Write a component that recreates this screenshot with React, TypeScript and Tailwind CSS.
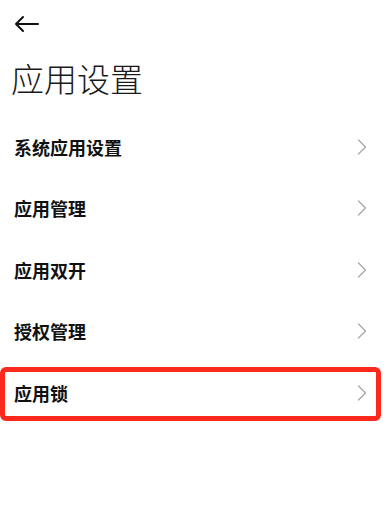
import React from "react";

const ITEMS = ["系统应用设置", "应用管理", "应用双开", "授权管理", "应用锁"];

function BackArrow() {
  return (
    <svg width="26" height="18" viewBox="0 0 26 18" fill="none">
      <path
        d="M24 9H2M9 2L2 9l7 7"
        stroke="#111"
        strokeWidth="2"
        strokeLinecap="round"
        strokeLinejoin="round"
      />
    </svg>
  );
}

function Chevron() {
  return (
    <svg width="10" height="16" viewBox="0 0 10 16" fill="none">
      <path
        d="M1.5 1L8.5 8l-7 7"
        stroke="#a8a8a8"
        strokeWidth="1.3"
        strokeLinecap="round"
        strokeLinejoin="round"
      />
    </svg>
  );
}

export default function App() {
  return (
    <div
      className="h-[517px] w-[391px] overflow-hidden bg-white text-[#111]"
      style={{ fontFamily: '"Noto Sans CJK SC", "Noto Sans", sans-serif' }}
    >
      <div className="flex h-[48px] items-center pl-[14px]">
        <BackArrow />
      </div>
      <h1 className="flex h-[68px] items-start pl-[11px] pt-[10px] text-[33px] font-light leading-[40px] text-[#1a1a1a]">
        应用设置
      </h1>
      <ul>
        {ITEMS.map((item, i) => (
          <li
            key={item}
            className="relative flex h-[61.5px] items-center justify-between pl-[14px] pr-[24px]"
          >
            <span className="text-[18px] font-bold leading-none">{item}</span>
            <Chevron />
            {i === ITEMS.length - 1 && (
              <div className="pointer-events-none absolute left-0 top-[4.5px] h-[54px] w-[381px] rounded-[6px] border-[5px] border-[#fc2a1c]" />
            )}
          </li>
        ))}
      </ul>
    </div>
  );
}
